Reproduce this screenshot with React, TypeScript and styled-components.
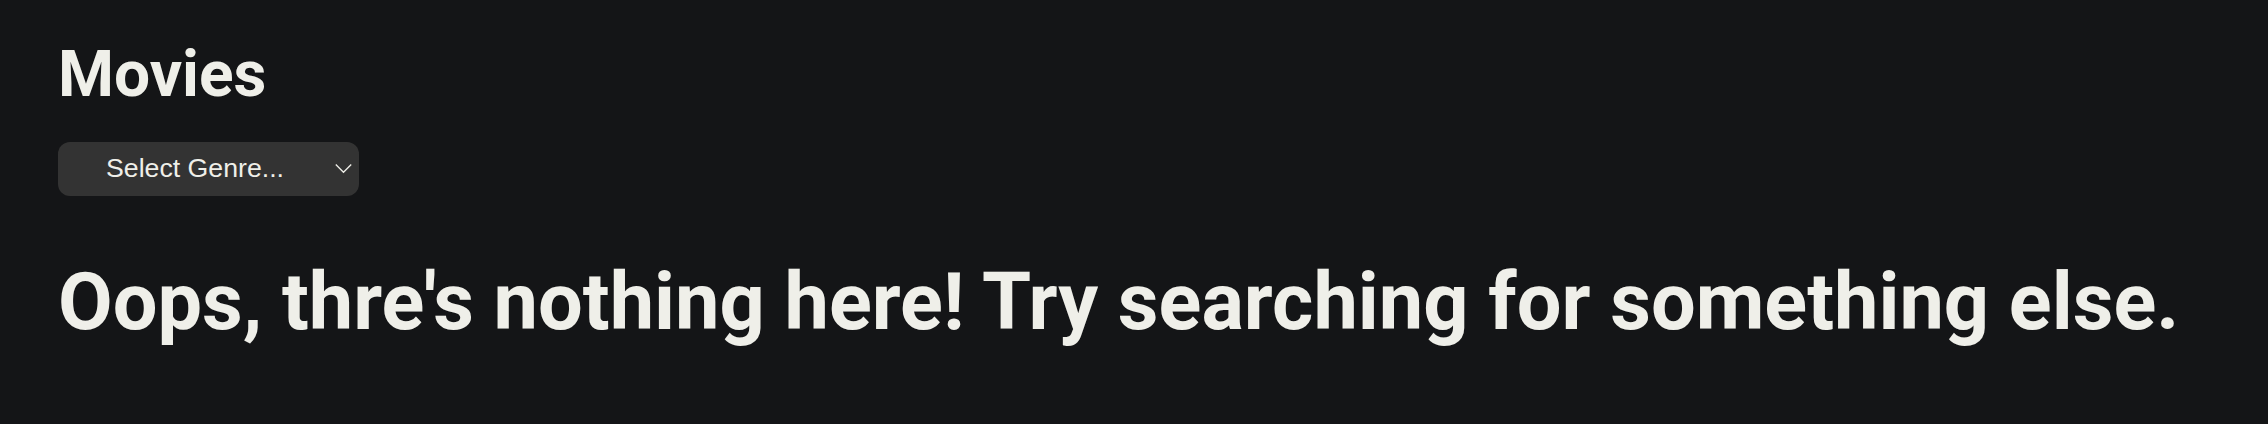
import React from "react";
import styled, { createGlobalStyle } from "styled-components";

const Global = createGlobalStyle`
  html, body {
    margin: 0;
    padding: 0;
    background: #141517;
  }
  body {
    font-family: Roboto, "Noto Sans", sans-serif;
    color: #efefe9;
  }
`;

const Page = styled.main`
  min-height: 424px;
  box-sizing: border-box;
  padding: 37px 58px 0 58px;
  display: flex;
  flex-direction: column;
  align-items: flex-start;
`;

const Title = styled.h1`
  margin: 0;
  font-family: Roboto, sans-serif;
  font-weight: 700;
  font-size: 64px;
  line-height: 1.2;
  color: #efefe9;
`;

const Select = styled.button`
  margin-top: 28px;
  width: 301px;
  height: 54px;
  box-sizing: border-box;
  display: flex;
  align-items: center;
  padding: 0 7px 0 48px;
  border: none;
  border-radius: 12px;
  background: #333333;
  color: #efefe9;
  font-family: "Liberation Sans", Arial, sans-serif;
  font-size: 26.7px;
  cursor: pointer;
`;

const Chevron = styled.svg`
  margin-left: auto;
  width: 17px;
  height: 11px;
`;

const Empty = styled.h2`
  margin: 58px 0 0 0;
  font-family: Roboto, sans-serif;
  font-weight: 700;
  font-size: 79.3px;
  line-height: 1.2;
  color: #efefe9;
  white-space: nowrap;
`;

export default function App() {
  return (
    <>
      <Global />
      <Page>
        <Title>Movies</Title>
        <Select type="button">
          <span>Select Genre...</span>
          <Chevron viewBox="0 0 17 11" fill="none">
            <polyline points="0.8,1.5 8.5,9.3 16.2,1.5" stroke="#efefe9" strokeWidth="1.3" />
          </Chevron>
        </Select>
        <Empty>Oops, thre's nothing here! Try searching for something else.</Empty>
      </Page>
    </>
  );
}
